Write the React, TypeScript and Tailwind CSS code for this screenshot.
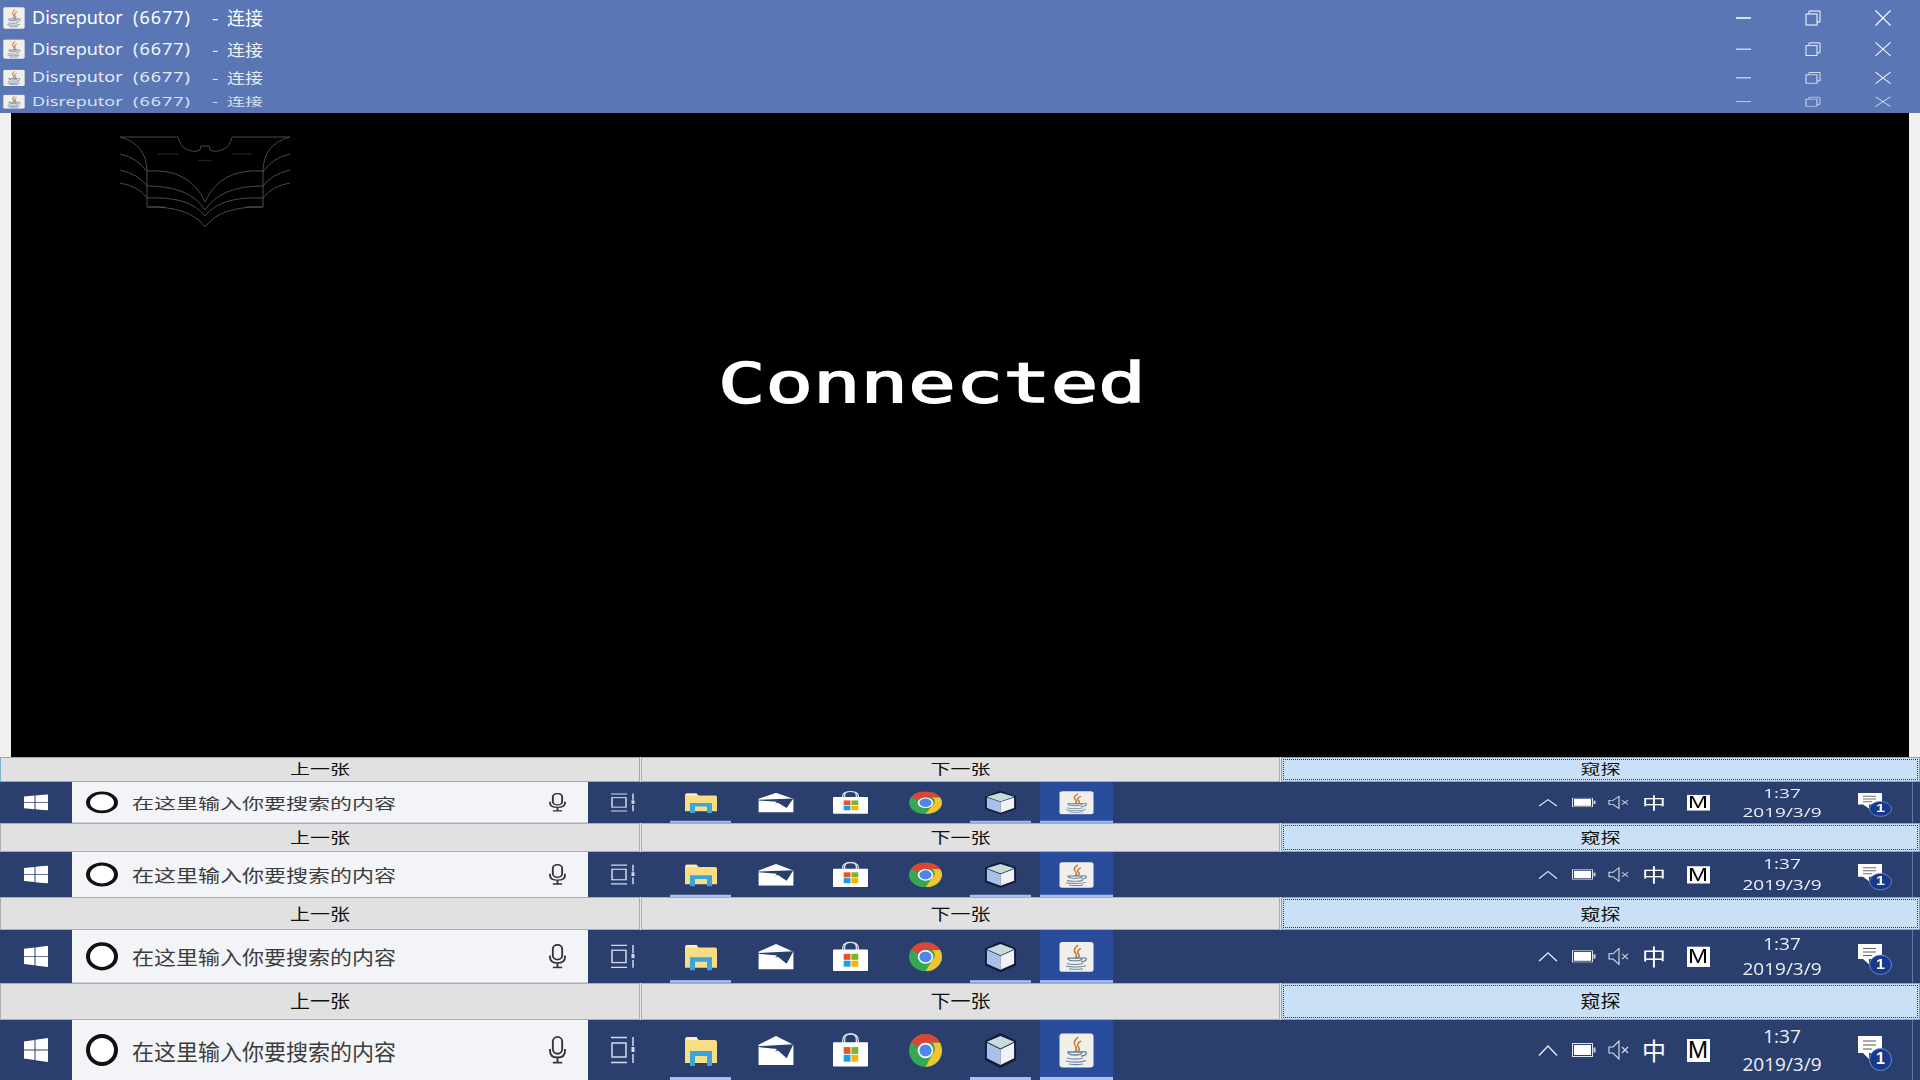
import React from 'react';

const JavaIcon: React.FC<{className?: string}> = ({className}) => (
  <svg viewBox="0 0 35 35" className={className}>
    <rect x="0.5" y="0.5" width="34" height="34" rx="3" fill="#f1efea"/>
    <path d="M19 4c-4 4-5 6-2 10 1 2 1 3-1 5M22 8c-4 2-4 5-2 7 1 2 0 3-2 4" fill="none" stroke="#c9793a" strokeWidth="1.6"/>
    <path d="M9 19h14c0 2-3 3-7 3s-7-1-7-3zM23 19c3-1 5 0 4 2s-3 2-5 2" fill="none" stroke="#5f7f9f" strokeWidth="1.3"/>
    <path d="M8 25c4 1.500 12 1.500 16 0M7 28c5 1.500 15 1.500 20-.5M10 31c4 .8 10 .8 14 0" fill="none" stroke="#6c88a6" strokeWidth="1.2"/>
  </svg>
);

const WinLogo = () => (
  <svg viewBox="0 0 24 24" className="h-6 w-6">
    <path d="M0 3.400 10.500 2v9.500H0zM11.500 1.800 24 0v11.500H11.500zM0 12.500h10.500V22L0 20.600zM11.500 12.500H24V24l-12.500-1.800z" fill="#fff"/>
  </svg>
);

const Mic = () => (
  <svg viewBox="0 0 18 30" className="h-[28px] w-[17px]" fill="none" stroke="#333" strokeWidth="2">
    <rect x="4" y="1" width="10" height="18" rx="5"/>
    <path d="M1 14v2c0 5 3 7 8 7s8-2 8-7v-2M9 23v5M4 28.500h10"/>
  </svg>
);

const TaskView = () => (
  <svg viewBox="0 0 24 28" className="h-[28px] w-[24px]" fill="none" stroke="#d5dbe8" strokeWidth="1.500">
    <path d="M0 1.500h16M0 26.500h16"/>
    <rect x="1" y="7" width="14" height="14"/>
    <path d="M22 1v9M22 18v9"/>
    <rect x="20.500" y="11" width="3" height="5" fill="#d5dbe8" stroke="none"/>
  </svg>
);

const Folder = () => (
  <svg viewBox="0 0 32 32" className="h-[32px] w-[32px]">
    <path d="M0 5c0-1 1-2 2-2h9l3 3h16c1 0 2 1 2 2v21H0z" fill="#f8dd85"/>
    <rect x="1" y="3" width="11" height="3" fill="#fff3bd"/>
    <path d="M5 32V17h22v15h-5V22H10v10z" fill="#38a5dd"/>
  </svg>
);

const Mail = () => (
  <svg viewBox="0 0 36 30" className="h-[29px] w-[36px]">
    <path d="M18 0 36 9v21H0V9z" fill="#fff"/>
    <path d="M0 10.500 36 8.500 29 23l-9-8-3 1 2-2.500L0 11.500z" fill="#2b3f6e"/>
  </svg>
);

const Store = () => (
  <svg viewBox="0 0 36 34" className="h-[34px] w-[35px]">
    <path d="M12 10V6c0-7 12-7 12 0v4M10 10V7c0-9 16-9 16 0v3" fill="none" stroke="#dfe5f0" strokeWidth="1.300"/>
    <rect x="0" y="9" width="36" height="25" rx="1" fill="#fff"/>
    <rect x="11" y="14" width="7" height="7" fill="#e2562a"/>
    <rect x="19" y="14" width="7" height="7" fill="#7cb51f"/>
    <rect x="11" y="22" width="7" height="7" fill="#1c9fe0"/>
    <rect x="19" y="22" width="7" height="7" fill="#f7b500"/>
  </svg>
);

const Chrome = () => (
  <svg viewBox="0 0 34 34" className="h-[33px] w-[33px]">
    <circle cx="17" cy="17" r="17" fill="#34a853"/>
    <path d="M2.300 8.500A17 17 0 0 1 32 9H17a8 8 0 0 0-7.500 5z" fill="#db4437"/>
    <path d="M32 9a17 17 0 0 1-15 25l7-13a8 8 0 0 0 0-12z" fill="#f4c430"/>
    <circle cx="17" cy="17" r="8" fill="#fff"/>
    <circle cx="17" cy="17" r="6.300" fill="#4f86ec"/>
  </svg>
);

const Cube = () => (
  <svg viewBox="0 0 34 36" className="h-[35px] w-[33px]">
    <path d="M17 0 33 8v20l-16 8-16-8V8z" fill="#141c3c"/>
    <path d="M17 3 31 9 17 16 3 9z" fill="#c5dedb"/>
    <path d="M3 10l14 7v16L3 26z" fill="#a9c1ea"/>
    <path d="M31 10 17 17v16l14-7z" fill="#eef2f7"/>
  </svg>
);

const Bat = () => (
  <svg viewBox="0 0 170 92" className="h-[92px] w-[170px]" fill="none" stroke="#4a4a4a" strokeWidth="1">
    {[false, true].map((flip) => (
      <g key={String(flip)} transform={flip ? 'matrix(-1 0 0 1 170 0)' : undefined}>
        <path d="M0 1H58Q60 10 66 13Q74 17 80 14L81 10H85"/>
        <path d="M0 1Q27 8 27 36V71H45"/>
        <path d="M0 18Q18 22 27 36M0 34Q18 38 27 50M0 47Q18 50 27 62"/>
        <path d="M27 35Q70 32 85 66M27 50Q70 50 85 74M27 62Q70 60 85 80M27 71Q70 70 85 91"/>
        <path d="M38 18H58M78 24Q81 26 85 24" stroke="#2c2c2c"/>
      </g>
    ))}
  </svg>
);

const Tray = () => (
  <div className="flex items-center text-white">
    <div className="flex w-[36px] justify-center">
      <svg viewBox="0 0 20 11" className="h-[11px] w-[20px]" fill="none" stroke="#e8ecf4" strokeWidth="1.300"><path d="M1 10.500 10 1l9 9.500"/></svg>
    </div>
    <div className="flex w-[36px] justify-center">
      <svg viewBox="0 0 24 14" className="h-[14px] w-[24px]">
        <rect x="0.500" y="0.500" width="20" height="13" fill="none" stroke="#dfe4ee"/>
        <rect x="2" y="2" width="17" height="10" fill="#fff"/>
        <rect x="21.500" y="4.500" width="2" height="5" fill="#cfd6e6"/>
      </svg>
    </div>
    <div className="flex w-[34px] justify-center">
      <svg viewBox="0 0 22 20" className="h-[20px] w-[22px]" fill="none" stroke="#d9dfeb" strokeWidth="1.100"><path d="M1 7v6h4l6 6V1L5 7z"/><path d="M14 7l6 6M20 7l-6 6"/></svg>
    </div>
    <div className="flex w-[36px] justify-center font-['Noto_Sans_CJK_SC',sans-serif] text-[24px] leading-none">中</div>
    <div className="flex w-[52px] justify-center">
      <div className="flex h-[23px] w-[23px] items-center justify-center bg-white font-['Liberation_Sans',sans-serif] text-[24px] leading-none text-black">M</div>
    </div>
    <div className="flex w-[116px] flex-col items-center font-['Open_Sans',sans-serif] text-[19px] leading-[28px] text-[#eef1f7]">
      <span>1:37</span>
      <span>2019/3/9</span>
    </div>
    <div className="flex w-[70px] justify-center pt-[3px]">
      <div className="relative h-[32px] w-[34px]">
        <svg viewBox="0 0 24 24" className="absolute left-0 top-0 h-[24px] w-[24px]">
          <path d="M0 0h24v17H11v6l-6-6H0z" fill="#fff"/>
          <path d="M5 5h13M5 9h13M5 13h9" stroke="#555" strokeWidth="1"/>
        </svg>
        <div className="absolute bottom-[-3px] right-0 flex h-[23px] w-[23px] items-center justify-center rounded-full border border-[#6f8fd0] bg-[#173a8c] font-['Liberation_Sans',sans-serif] text-[16px] font-bold leading-none text-white">1</div>
      </div>
    </div>
  </div>
);

const Cell: React.FC<{children: React.ReactNode; running?: boolean}> = ({children, running}) => (
  <div className="relative flex h-full w-[75px] items-center justify-center">
    {children}
    {running && <div className="absolute bottom-0 left-[7px] h-[3px] w-[61px] bg-[#a9c1f2]"/>}
  </div>
);

const Taskbar: React.FC<{height: string; scale: string}> = ({height, scale}) => (
  <div className={`${height} overflow-hidden bg-[#2b3f6e]`}>
    <div className={`${scale} flex h-[60px] origin-top items-center`}>
      <div className="flex h-full w-[72px] items-center justify-center"><WinLogo/></div>
      <div className="flex h-full w-[516px] items-center bg-[#f2f4f8]">
        <div className="ml-[14px] h-[32px] w-[32px] rounded-full border-[4px] border-[#111] bg-white"/>
        <span className="ml-[14px] font-['Noto_Sans_CJK_SC',sans-serif] text-[22px] text-[#3c3c3c]">在这里输入你要搜索的内容</span>
        <div className="ml-auto mr-[22px]"><Mic/></div>
      </div>
      <div className="flex h-full w-[75px] items-center justify-center pr-[5px]"><TaskView/></div>
      <Cell running><Folder/></Cell>
      <Cell><Mail/></Cell>
      <Cell><Store/></Cell>
      <Cell><Chrome/></Cell>
      <Cell running><Cube/></Cell>
      <div className="relative ml-[2px] flex h-full w-[73px] items-center justify-center bg-[#2a4c9c]">
        <JavaIcon className="h-[35px] w-[35px]"/>
        <div className="absolute bottom-0 left-0 h-[3px] w-full bg-[#a9c1f2]"/>
      </div>
      <div className="flex-1"/>
      <Tray/>
      <div className="ml-[2px] h-full w-px bg-[#65779f]"/>
      <div className="w-[7px]"/>
    </div>
  </div>
);

const ButtonRow: React.FC<{height: string; scale: string; focus?: boolean}> = ({height, scale, focus}) => {
  const label = `${scale} font-['Noto_Sans_CJK_SC',sans-serif] text-[20px] leading-none text-[#111]`;
  return (
    <div className={`${height} flex gap-px bg-[#e8e8e8]`}>
      <div className={`flex w-[640px] items-center justify-center border bg-[#e1e1e1] pb-[2px] ${focus ? 'border-[#7db0cf]' : 'border-[#adadad]'}`}>
        <span className={label}>上一张</span>
      </div>
      <div className="flex w-[639px] items-center justify-center border border-[#adadad] bg-[#e1e1e1] pb-[2px]">
        <span className={label}>下一张</span>
      </div>
      <div className="flex-1 border border-[#7ea6c6] bg-[#c9e0f7] p-px">
        <div className="flex h-full items-center justify-center border border-dotted border-[#2c3a44] pb-[2px]">
          <span className={label}>窥探</span>
        </div>
      </div>
    </div>
  );
};

const TitleRow: React.FC<{height: string; scale: string; color: string}> = ({height, scale, color}) => (
  <div className={`${height} overflow-hidden`}>
    <div className={`${scale} ${color} flex h-[35px] origin-top items-center pl-[3px] pr-[2px] font-['Noto_Sans_CJK_SC',sans-serif] text-[18px]`}>
      <JavaIcon className="h-[22px] w-[22px]"/>
      <span className="ml-[7px] w-[101px] font-['Noto_Sans',sans-serif]">Disreputor</span>
      <span className="w-[79px] font-['Noto_Sans',sans-serif] tracking-[1px]">(6677)</span>
      <span className="w-[15px]">-</span>
      <span>连接</span>
      <div className="ml-auto flex items-center">
        <div className="flex w-[70px] justify-center">
          <svg viewBox="0 0 15 2" className="h-[2px] w-[15px]"><path d="M0 1h15" stroke="currentColor" strokeWidth="1.500"/></svg>
        </div>
        <div className="flex w-[70px] justify-center">
          <svg viewBox="0 0 16 16" className="h-[16px] w-[16px]" fill="none" stroke="currentColor" strokeWidth="1"><rect x="1" y="4" width="11" height="11"/><path d="M4 4V1h11v11h-3"/></svg>
        </div>
        <div className="flex w-[70px] justify-center">
          <svg viewBox="0 0 16 16" className="h-[16px] w-[16px]" fill="none" stroke="currentColor" strokeWidth="1.100"><path d="M0.500 0.500l15 15M15.500 0.500l-15 15"/></svg>
        </div>
      </div>
    </div>
  </div>
);

const App: React.FC = () => {
  return (
    <div className="flex h-[1080px] w-[1920px] flex-col overflow-hidden bg-[#f0f0f0]">
      <div className="h-[113px] bg-[#5a76b5]">
        <TitleRow height="h-[33px]" scale="scale-y-100" color="text-white"/>
        <TitleRow height="h-[31px]" scale="scale-y-[0.9]" color="text-[#f2f5fb]"/>
        <TitleRow height="h-[26px]" scale="scale-y-[0.77]" color="text-[#e6ebf6]"/>
        <TitleRow height="h-[23px]" scale="scale-y-[0.65]" color="text-[#d8e0f1]"/>
      </div>
      <div className="mx-[11px] h-[644px] bg-black">
        <div className="ml-[109px] pt-[23px]"><Bat/></div>
        <div className="ml-[707px] mt-[120px] w-[306px] origin-left scale-x-[1.41] font-['DejaVu_Sans_Mono',monospace] text-[56px] leading-[70px] text-white [-webkit-text-stroke:1.5px_white]">Connected</div>
      </div>
      <ButtonRow height="h-[25px]" scale="scale-y-[0.68]" focus/>
      <Taskbar height="h-[41px]" scale="scale-y-[0.68]"/>
      <ButtonRow height="h-[29px]" scale="scale-y-[0.75]"/>
      <Taskbar height="h-[45px]" scale="scale-y-[0.75]"/>
      <ButtonRow height="h-[33px]" scale="scale-y-[0.82]"/>
      <Taskbar height="h-[53px]" scale="scale-y-[0.88]"/>
      <ButtonRow height="h-[37px]" scale="scale-y-[0.92]"/>
      <Taskbar height="h-[60px]" scale="scale-y-100"/>
    </div>
  );
};

export default App;
